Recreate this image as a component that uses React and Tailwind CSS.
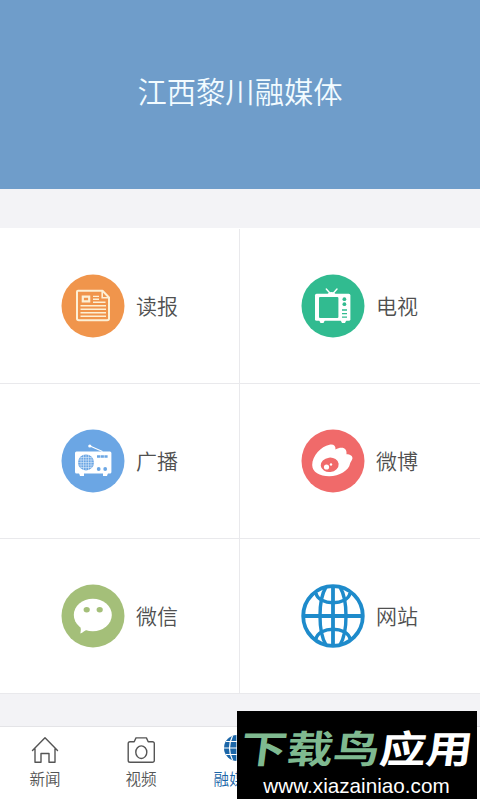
const NewspaperIcon = () => (
  <svg viewBox="0 0 64 64" className="w-16 h-16" fill="none" stroke="#fdf0d5">
    <circle cx="32" cy="32" r="31.5" fill="#f0954c" stroke="none" />
    <path d="M17 16.8h24.5l6.5 6.7v21a1.8 1.8 0 0 1-1.8 1.8H17.8a1.8 1.8 0 0 1-1.8-1.8V17.8a1 1 0 0 1 1-1z" strokeWidth="2" strokeLinejoin="round" />
    <path d="M41.2 17v6.7H48" strokeWidth="1.6" />
    <path d="M21.8 22.7h6.4v4.6h-6.4z" strokeWidth="2.2" />
    <path d="M32 22.4h6M32 25.2h6M32 28.2h12.5M19.5 31.8H45M19.5 35.2H45M19.5 38.7H45M19.5 42.3H45" strokeWidth="1.4" />
  </svg>
);

const TvIcon = () => (
  <svg viewBox="0 0 64 64" className="w-16 h-16">
    <circle cx="32" cy="32" r="31.5" fill="#31bb90" />
    <path d="M25.3 15l4 4.5M36 15l-4 4.5" stroke="#fff" strokeWidth="1.4" strokeLinecap="round" />
    <path d="M26.5 20.5c.8-3.4 7.2-3.4 8 0z" fill="#fff" />
    <rect x="14" y="19.8" width="35.4" height="27" rx="1.6" fill="#fff" />
    <path d="M18 46h6l-1.5 3h-3zM39.5 46h6L44 49h-3z" fill="#fff" />
    <rect x="18" y="22.9" width="19.4" height="21" rx="1" fill="#31bb90" />
    <circle cx="43.4" cy="25.2" r="1.9" fill="#31bb90" />
    <circle cx="43.4" cy="30.2" r="1.9" fill="#31bb90" />
    <path d="M41 36h5M41 39.6h5M41 43.2h5" stroke="#31bb90" strokeWidth="1.3" />
  </svg>
);

const RadioIcon = () => (
  <svg viewBox="0 0 64 64" className="w-16 h-16">
    <circle cx="32" cy="32" r="31.5" fill="#6ba6e4" />
    <path d="M29 17l12.5 5.5" stroke="#fff" strokeWidth="1.1" />
    <circle cx="28.8" cy="17" r="1.6" fill="#fff" />
    <rect x="14" y="22.4" width="36.4" height="22" rx="1.5" fill="#fff" />
    <path d="M18 44h5v3h-4zM42 44h5l-1 3h-4z" fill="#fff" />
    <circle cx="25" cy="33.4" r="8" fill="#6ba6e4" />
    <path d="M20 28v11M22.5 26v15M25 25.5v16M27.5 26v15M30 28v11M19.5 28.5h11M17.5 31h15M17 33.5h16M17.5 36h15M19.5 38.5h11" stroke="#dcebfa" strokeWidth=".6" />
    <path d="M36 27.5h10.6" stroke="#6ba6e4" strokeWidth="2.6" strokeDasharray="3.2 .5" />
    <circle cx="37.7" cy="40" r="1.9" fill="#6ba6e4" />
    <circle cx="44.2" cy="40" r="1.9" fill="#6ba6e4" />
  </svg>
);

const WeiboIcon = () => (
  <svg viewBox="0 0 64 64" className="w-16 h-16">
    <circle cx="32" cy="32" r="31.5" fill="#f06a6a" />
    <path d="M11.2 36C11.2 27 20 17.5 28.5 15.8c4-.8 6.3 1.2 6 4.6 4-2 8.5-2.4 10.4.6.8 1.6.6 2.8.6 4.3 3.6.1 6.5 1.7 5.9 4.5-.4 2-2 3-2.4 5-1 6.5-10.7 12.5-20.8 12.5-9.5 0-17-4.2-17-11.3z" fill="#fff" />
    <ellipse cx="28.7" cy="35.8" rx="9" ry="7.2" transform="rotate(-6 28.7 35.8)" fill="#f06a6a" />
    <circle cx="25.5" cy="38" r="2.6" fill="#fff" />
    <circle cx="30" cy="35.5" r="1.2" fill="#fff" />
  </svg>
);

const WechatIcon = () => (
  <svg viewBox="0 0 64 64" className="w-16 h-16">
    <circle cx="32" cy="32" r="31.5" fill="#a4bf79" />
    <ellipse cx="31.8" cy="31" rx="19" ry="16.2" fill="#fff" />
    <path d="M18.5 41c2 3 1.3 6 .8 8.5 2.6-1 4.5-3 6.7-3.8z" fill="#fff" />
    <ellipse cx="25.7" cy="25.7" rx="3.1" ry="2.7" fill="#a4bf79" />
    <ellipse cx="38.7" cy="25.7" rx="3.1" ry="2.7" fill="#a4bf79" />
  </svg>
);

const GlobeIcon = () => (
  <svg viewBox="0 0 64 64" className="w-16 h-16" fill="none" stroke="#1e8bcb" strokeWidth="3.8">
    <circle cx="32" cy="32" r="29.8" />
    <path d="M32 2v60M2 32h60" />
    <path d="M25 3c-8 13-8 45 0 58M39 3c8 13 8 45 0 58" strokeWidth="3.4" />
    <path d="M15 9C17 22 47 22 49 9M15 55C17 42 47 42 49 55" strokeWidth="3.4" />
  </svg>
);

const HomeIcon = () => (
  <svg viewBox="0 0 30 30" className="w-[30px] h-[30px]" fill="none" stroke="#555" strokeWidth="1.4" strokeLinejoin="round" strokeLinecap="round">
    <path d="M2.5 15.5L15 2.7l12.5 12.8M5 14v13.3h6V18.5h8v8.8h6V14" />
  </svg>
);

const CameraIcon = () => (
  <svg viewBox="0 0 30 30" className="w-[30px] h-[30px]" fill="none" stroke="#555" strokeWidth="1.4" strokeLinejoin="round">
    <path d="M4 6.8h4.2l1.8-3.9h10.4l1.8 3.9h4.3a1.8 1.8 0 0 1 1.8 1.8v16.9a1.8 1.8 0 0 1-1.8 1.8H4a1.8 1.8 0 0 1-1.8-1.8V8.600a1.8 1.8 0 0 1 1.8-1.8z" />
    <ellipse cx="15.3" cy="17.2" rx="5.5" ry="6.3" />
  </svg>
);

const TabGlobeIcon = () => (
  <svg viewBox="0 0 30 30" className="w-[30px] h-[30px]">
    <circle cx="15" cy="13" r="13" fill="#1b66a8" />
    <path d="M15 0v26M2 13h26M4 6.5h22M4 19.5h22M10.5 1c-4 8-4 16 0 24M19.5 1c4 8 4 16 0 24" stroke="#fff" strokeWidth="1.2" fill="none" />
  </svg>
);

const channels = [
  { name: '读报', icon: NewspaperIcon },
  { name: '电视', icon: TvIcon },
  { name: '广播', icon: RadioIcon },
  { name: '微博', icon: WeiboIcon },
  { name: '微信', icon: WechatIcon },
  { name: '网站', icon: GlobeIcon },
];

const tabs = [
  { name: '新闻', icon: HomeIcon, color: 'text-[#555]' },
  { name: '视频', icon: CameraIcon, color: 'text-[#555]' },
  { name: '融媒体', icon: TabGlobeIcon, color: 'text-[#1b66a8]' },
];

const App = () => {
  return (
    <div className="relative w-[480px] h-[800px] overflow-hidden flex flex-col bg-[#f3f3f6] font-['Noto_Sans_CJK_SC',sans-serif]">
      <header className="h-[189px] shrink-0 bg-[#6f9dca] flex items-center justify-center">
        <h1 className="text-[29.3px] leading-none font-[350] text-[#f2fbff] pb-[7px]">江西黎川融媒体</h1>
      </header>

      <main className="mt-[39px] grid grid-cols-2 bg-white pt-px">
        {channels.map(({ name, icon: Icon }) => (
          <div key={name} className="h-[155px] flex items-center gap-[11px] pl-[61px] border-b border-[#e9e9ec] odd:border-r">
            <Icon />
            <span className="text-[21px] leading-none font-[350] text-[#505050] pb-0.5">{name}</span>
          </div>
        ))}
      </main>

      <nav className="mt-auto h-[74px] -ml-[3px] flex bg-white border-t border-[#e4e4e7]">
        {tabs.map(({ name, icon: Icon, color }) => (
          <div key={name} className={`w-24 pt-2 flex flex-col items-center gap-1.5 ${color}`}>
            <Icon />
            <span className="text-[15.6px] leading-none font-[350]">{name}</span>
          </div>
        ))}
      </nav>

      {/* site badge over the tab bar */}
      <div className="absolute left-[237px] top-[711px] w-60 h-22 bg-black flex flex-col items-center">
        <div className="mt-4 text-[40px] leading-[40px] font-bold whitespace-nowrap scale-x-[1.16] scale-y-[0.95] -skew-x-6">
          <span className="text-[#7fb990]">下载鸟</span>
          <span className="text-white">应用</span>
        </div>
        <div className="mt-[7px] pr-px text-[20.7px] leading-6 text-white font-['Liberation_Sans',sans-serif]">www.xiazainiao.com</div>
      </div>
    </div>
  );
};

export default App;
